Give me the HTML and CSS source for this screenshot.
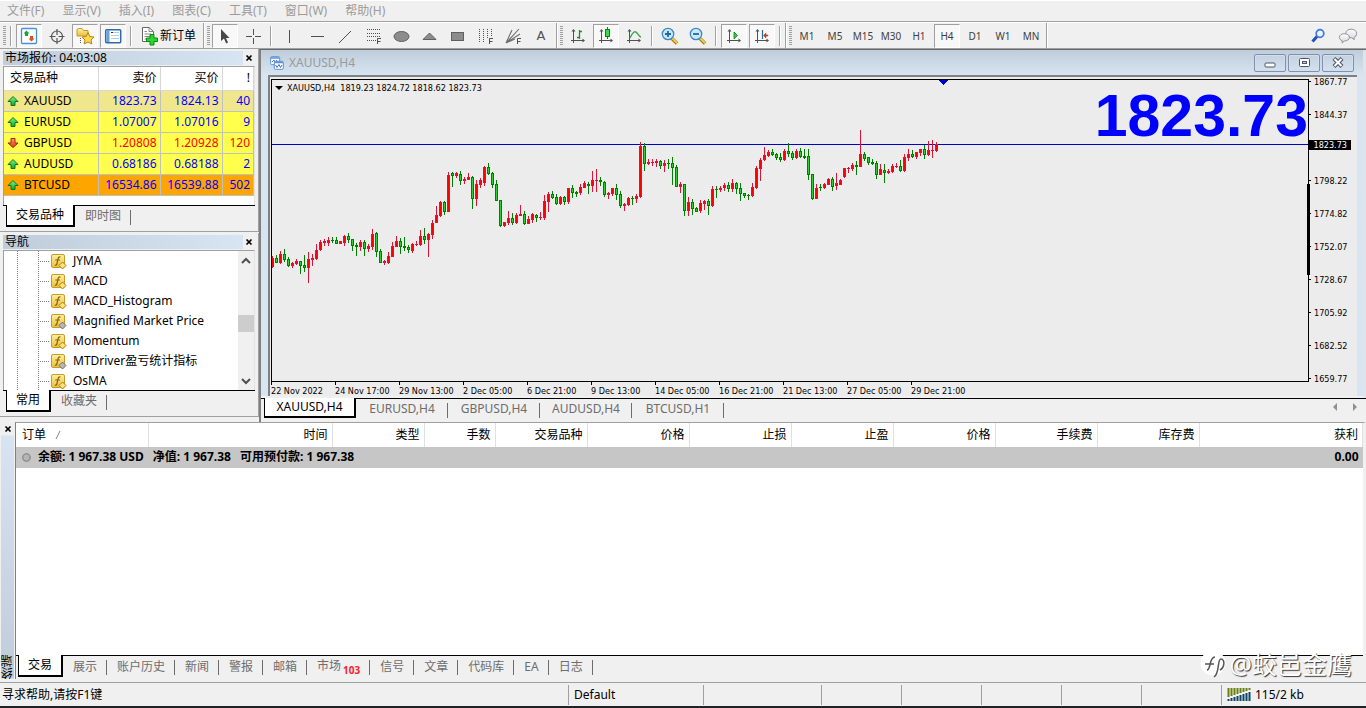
FILE: index.html
```html
<!DOCTYPE html>
<html lang="zh-CN">
<head>
<meta charset="utf-8">
<title>XAUUSD,H4</title>
<link rel="stylesheet" href="styles.css">
</head>
<body>
<svg class="defs" aria-hidden="true">
  <defs>
    <linearGradient id="gold" x1="0" y1="0" x2="0" y2="1"><stop offset="0" stop-color="#fff0a0"/><stop offset="1" stop-color="#e9bf3c"/></linearGradient>
    <linearGradient id="green" x1="0" y1="0" x2="0" y2="1"><stop offset="0" stop-color="#7df08a"/><stop offset="1" stop-color="#12a82c"/></linearGradient>
    <linearGradient id="red" x1="0" y1="0" x2="0" y2="1"><stop offset="0" stop-color="#ff9a70"/><stop offset="1" stop-color="#dd3a12"/></linearGradient>
    <linearGradient id="bubble" x1="0" y1="0" x2="0" y2="1"><stop offset="0" stop-color="#ffffff"/><stop offset="1" stop-color="#d4d4dc"/></linearGradient>
  </defs>
  <symbol id="up" viewBox="0 0 12 12"><path d="M6 1.500 L11 6.500 H8 V10.500 H4 V6.500 H1 Z" fill="url(#green)" stroke="#0b7420" stroke-width="1"/></symbol>
  <symbol id="down" viewBox="0 0 12 12"><path d="M6 10.500 L11 6 H8 V1.500 H4 V6 H1 Z" fill="url(#red)" stroke="#a02508" stroke-width="1"/></symbol>
  <symbol id="close" viewBox="0 0 8 8"><path d="M1.500 1.500 L6.500 6.500 M6.500 1.500 L1.500 6.500" stroke="#000" stroke-width="1.700"/></symbol>
  <symbol id="fn" viewBox="0 0 17 16">
    <rect x="1.500" y="1.500" width="13" height="13" rx="1.500" fill="url(#gold)" stroke="#c99a2a"/>
    <path d="M10.500 4.200 C9 3.300 8.300 4.500 8 6 L7 10.500 C6.700 12 6 12.500 4.800 12 M5.300 7 H10" fill="none" stroke="#8a6208" stroke-width="1.200"/>
  </symbol>
  <symbol id="axes" viewBox="0 0 20 20">
    <path d="M5.500 4 V17 M3 14.500 H16" stroke="#505050" fill="none"/>
    <path d="M5.500 3 L7.500 5.500 H3.500 Z M17 14.500 L14.500 12.500 V16.500 Z" fill="#505050"/>
  </symbol>
</svg>

<div class="app">
<nav class="menubar" aria-label="菜单">
  <button>文件(F)</button><button>显示(V)</button><button>插入(I)</button><button>图表(C)</button><button>工具(T)</button><button>窗口(W)</button><button>帮助(H)</button>
</nav>

<div class="toolbar">
  <div class="group">
    <i class="grip"></i><i class="sep"></i>
    <button class="tool on" aria-label="市场报价"><svg viewBox="0 0 20 20"><rect x="2.500" y="2.500" width="15" height="15" rx="1" fill="#fff" stroke="#4a90d9" stroke-width="1.300"/><path d="M7.500 4.500 L10.500 7.500 H9 V10 H6 V7.500 H4.500 Z" fill="#18a52e"/><path d="M12.500 15.500 L15.500 12.500 H14 V10 H11 V12.500 H9.500 Z" fill="#e2501c"/></svg></button>
    <button class="tool" aria-label="数据窗口"><svg viewBox="0 0 20 20" fill="none" stroke="#555" stroke-width="1.200"><circle cx="10" cy="10.500" r="5.500"/><path d="M10 3 V9 M10 12 V18 M2.500 10.500 H8.500 M11.500 10.500 H17.500"/></svg></button>
    <button class="tool on" aria-label="导航"><svg viewBox="0 0 20 20"><path d="M2 10 V4 Q2 2.500 3.500 2.500 H7 L8.500 4.500 H13 V10 Z" fill="url(#gold)" stroke="#c79a2c"/><path d="M5.500 12 V18" stroke="#555" stroke-dasharray="1 1"/><path d="M13 6.500 L14.800 10.500 L19 11 L16 14 L16.800 18 L13 16 L9.200 18 L10 14 L7 11 L11.200 10.500 Z" fill="#ffd84c" stroke="#b98518"/></svg></button>
    <button class="tool on" aria-label="终端"><svg viewBox="0 0 20 20"><rect x="2.700" y="3.700" width="15" height="13" rx="1" fill="#fff" stroke="#2b6cb0" stroke-width="1.500"/><path d="M5 4 V16" stroke="#6aa3da" stroke-width="3"/><path d="M8 6.500 H16 M8 9.500 H16 M8 12.500 H16" stroke="#b8cbe4"/><path d="M8 6.500 H10" stroke="#333"/></svg></button>
    <i class="sep"></i>
    <button class="order"><svg viewBox="0 0 20 20"><path d="M3.500 1.500 H10 L14.500 5.500 V15.500 H3.500 Z" fill="#fff" stroke="#666"/><path d="M10 1.500 V5.500 H14.500 M5.500 5.500 H8 M5.500 8 H12 M5.500 10.500 H12 M5.500 13 H9" fill="none" stroke="#888"/><path d="M11 8.500 H15 V12 H18.500 V15.500 H15 V19 H11 V15.500 H7.500 V12 H11 Z" fill="#2fd52f" stroke="#078a14"/></svg>新订单</button>
  </div>
  <div class="group">
    <i class="grip"></i>
    <button class="tool on" aria-label="光标"><svg viewBox="0 0 20 20"><path d="M6 3 V15 L9 12.500 L11.200 17.500 L13 16.500 L11 12 H14.500 Z" fill="#484848"/></svg></button>
    <button class="tool" aria-label="十字准线"><svg viewBox="0 0 20 20"><path d="M10.500 3 V9 M10.500 12 V18 M3 10.500 H9 M12 10.500 H18" stroke="#505050"/></svg></button>
    <i class="sep"></i>
    <button class="tool" aria-label="垂直线"><svg viewBox="0 0 20 20"><path d="M10.500 4 V17" stroke="#505050"/></svg></button>
    <button class="tool" aria-label="水平线"><svg viewBox="0 0 20 20"><path d="M4 10.500 H17" stroke="#505050"/></svg></button>
    <button class="tool" aria-label="趋势线"><svg viewBox="0 0 20 20"><path d="M4 17 L16 5" stroke="#505050" stroke-width="1"/></svg></button>
    <button class="tool" aria-label="斐波纳契回调线"><svg viewBox="0 0 20 20"><path d="M4 3.500 H18 M4 7.500 H18 M4 10.500 H18 M4 14.500 H13" stroke="#505050" stroke-dasharray="1 1"/><path d="M14.500 18 V12.500 H18 M14.500 15.500 H17.500" fill="none" stroke="#505050"/></svg></button>
    <button class="tool" aria-label="椭圆"><svg viewBox="0 0 20 20"><ellipse cx="10.500" cy="10.500" rx="7.500" ry="5" fill="#8c8c8c" stroke="#606060"/></svg></button>
    <button class="tool" aria-label="三角形"><svg viewBox="0 0 20 20"><path d="M4 13.500 L10.500 7 L17 13.500 Z" fill="#8c8c8c" stroke="#606060"/></svg></button>
    <button class="tool" aria-label="矩形"><svg viewBox="0 0 20 20"><rect x="4.500" y="6.500" width="12" height="8" fill="#8c8c8c" stroke="#606060"/></svg></button>
    <button class="tool" aria-label="时间周期线"><svg viewBox="0 0 20 20"><path d="M4.500 3 V16 M8.500 3 V16 M12.500 3 V13 M16.500 3 V11" stroke="#505050" stroke-dasharray="1 1"/><path d="M14.500 18 V12.500 H18 M14.500 15.500 H17.500" fill="none" stroke="#505050"/></svg></button>
    <button class="tool" aria-label="斐波纳契扇形线"><svg viewBox="0 0 20 20"><path d="M3 17 L9 4 M3 17 L16 3 M3 17 L17 8 M3 17 L12 13" stroke="#707070" stroke-width="1.100"/><path d="M14.500 18 V12.500 H18 M14.500 15.500 H17.500" fill="none" stroke="#505050"/></svg></button>
    <button class="tool letter">A</button>
  </div>
  <div class="group">
    <i class="grip"></i>
    <button class="tool" aria-label="柱状图"><svg viewBox="0 0 20 20"><use href="#axes"/><path d="M11.500 4 V13 M12 5.500 H14 M9 11.500 H11" stroke="#15941f" stroke-width="1.300"/></svg></button>
    <button class="tool on" aria-label="阴阳烛"><svg viewBox="0 0 20 20"><use href="#axes"/><path d="M11.500 1 V13" stroke="#0a8514"/><rect x="9.500" y="3.500" width="4" height="7" fill="#35dc45" stroke="#0a8514"/></svg></button>
    <button class="tool" aria-label="折线图"><svg viewBox="0 0 20 20"><use href="#axes"/><path d="M6 12 Q10 3 13 7 T17 11" fill="none" stroke="#3aa545" stroke-width="1.300"/></svg></button>
    <i class="sep"></i>
    <button class="tool" aria-label="放大"><svg viewBox="0 0 20 20"><path d="M12 12.500 L17 17.500" stroke="#a87712" stroke-width="3.500"/><path d="M12 12 L17 17" stroke="#f3cf4a" stroke-width="1.800"/><circle cx="8" cy="8" r="5.700" fill="#c9e9fb" stroke="#3a87c8" stroke-width="1.300"/><path d="M8 5 V11 M5 8 H11" stroke="#25689e" stroke-width="1.800"/></svg></button>
    <button class="tool" aria-label="缩小"><svg viewBox="0 0 20 20"><path d="M12 12.500 L17 17.500" stroke="#a87712" stroke-width="3.500"/><path d="M12 12 L17 17" stroke="#f3cf4a" stroke-width="1.800"/><circle cx="8" cy="8" r="5.700" fill="#c9e9fb" stroke="#3a87c8" stroke-width="1.300"/><path d="M5 8 H11" stroke="#25689e" stroke-width="1.800"/></svg></button>
    <i class="sep"></i>
    <button class="tool on" aria-label="自动滚动"><svg viewBox="0 0 20 20"><use href="#axes"/><path d="M10 6 L13.500 9.500 L10 13 Z" fill="#2ecc40" stroke="#0a8514" stroke-width=".8"/></svg></button>
    <button class="tool on" aria-label="图表平移"><svg viewBox="0 0 20 20"><use href="#axes"/><path d="M10.500 4 V13" stroke="#1c6ea4" stroke-width="1.200"/><path d="M11.500 9.500 L14 7 V9 H16 V10 H14 V12 Z" fill="#c23b12" stroke="#c23b12" stroke-width=".5"/></svg></button>
    <i class="sep"></i>
  </div>
  <div class="group">
    <i class="grip"></i>
    <button class="tool tf">M1</button><button class="tool tf">M5</button><button class="tool tf">M15</button><button class="tool tf">M30</button><button class="tool tf">H1</button><button class="tool tf on">H4</button><button class="tool tf">D1</button><button class="tool tf">W1</button><button class="tool tf">MN</button>
  </div>
  <div class="right">
    <button class="tool" aria-label="搜索"><svg viewBox="0 0 20 20"><path d="M9 10.500 L4.500 15.500" stroke="#1d50b8" stroke-width="3"/><circle cx="12" cy="7.500" r="3.800" fill="#eaf3fd" stroke="#3c78dc" stroke-width="1.700"/></svg></button>
    <button class="tool" aria-label="聊天"><svg viewBox="0 0 22 20"><path d="M14.500 2.500 C18 2.500 20.500 4.500 20.500 7.300 C20.500 9.500 19 11.200 17.500 11.700 L18 14 L15 12 C11 12.200 8.500 10 8.500 7.300 C8.500 4.500 11 2.500 14.500 2.500 Z" fill="url(#bubble)" stroke="#8a8a8a"/><path d="M7 7.500 C10 7.500 12.500 9 12.500 11.500 C12.500 14 10 15.500 7 15.500 L4.500 17.800 L4.700 15.200 C2.500 14.500 1.500 13 1.500 11.500 C1.500 9 4 7.500 7 7.500 Z" fill="url(#bubble)" stroke="#8a8a8a"/></svg></button>
  </div>
</div>

<main class="work">
  <aside class="dock">
    <section class="panel">
      <header class="caption"><h2>市场报价: 04:03:08</h2><button aria-label="关闭"><svg><use href="#close"/></svg></button></header>
      <div class="well quotes-well">
      <table class="quotes">
        <colgroup><col class="c-name"><col class="c-px"><col class="c-px"><col></colgroup>
        <thead><tr><th>交易品种</th><th>卖价</th><th>买价</th><th>!</th></tr></thead>
        <tbody>
          <tr class="khaki"><td><svg><use href="#up"/></svg>XAUUSD</td><td>1823.73</td><td>1824.13</td><td>40</td></tr>
          <tr><td><svg><use href="#up"/></svg>EURUSD</td><td>1.07007</td><td>1.07016</td><td>9</td></tr>
          <tr class="falling"><td><svg><use href="#down"/></svg>GBPUSD</td><td>1.20808</td><td>1.20928</td><td>120</td></tr>
          <tr><td><svg><use href="#up"/></svg>AUDUSD</td><td>0.68186</td><td>0.68188</td><td>2</td></tr>
          <tr class="orange"><td><svg><use href="#up"/></svg>BTCUSD</td><td>16534.86</td><td>16539.88</td><td>502</td></tr>
        </tbody>
      </table>
      </div>
      <div class="tabs"><button class="tab active">交易品种</button><button class="tab">即时图</button></div>
    </section>
    <section class="panel">
      <header class="caption"><h2>导航</h2><button aria-label="关闭"><svg><use href="#close"/></svg></button></header>
      <div class="well tree-well">
        <ul class="tree">
          <li><svg><use href="#fn"/><path class="gem" d="M12.500 9 L16 12.500 L12.500 16 L9 12.500 Z"/></svg>JYMA</li>
          <li><svg><use href="#fn"/><path class="gem" d="M12.500 9 L16 12.500 L12.500 16 L9 12.500 Z"/></svg>MACD</li>
          <li><svg><use href="#fn"/><path class="gem" d="M12.500 9 L16 12.500 L12.500 16 L9 12.500 Z"/></svg>MACD_Histogram</li>
          <li><svg><use href="#fn"/><path class="gem grey" d="M12.500 9 L16 12.500 L12.500 16 L9 12.500 Z"/></svg>Magnified Market Price</li>
          <li><svg><use href="#fn"/><path class="gem" d="M12.500 9 L16 12.500 L12.500 16 L9 12.500 Z"/></svg>Momentum</li>
          <li><svg><use href="#fn"/><path class="gem grey" d="M12.500 9 L16 12.500 L12.500 16 L9 12.500 Z"/></svg>MTDriver盈亏统计指标</li>
          <li><svg><use href="#fn"/><path class="gem" d="M12.500 9 L16 12.500 L12.500 16 L9 12.500 Z"/></svg>OsMA</li>
        </ul>
        <div class="scroll">
          <svg viewBox="0 0 16 20"><path d="M4 12 L8 8 L12 12" fill="none" stroke="#505050" stroke-width="2"/></svg>
          <i class="thumb"></i>
          <svg viewBox="0 0 16 20"><path d="M4 9 L8 13 L12 9" fill="none" stroke="#505050" stroke-width="2"/></svg>
        </div>
      </div>
      <div class="tabs"><button class="tab active">常用</button><button class="tab">收藏夹</button></div>
    </section>
  </aside>

  <section class="mdi">
    <div class="window">
      <header class="titlebar">
        <svg class="app-icon" viewBox="0 0 14 14"><rect x=".7" y=".7" width="9" height="8" rx="1" fill="#fff" stroke="#5b8fd6"/><path d="M1 2 H9" stroke="#5b8fd6" stroke-width="1.500"/><path d="M2 6 L4 4 L5 7 L7 4" fill="none" stroke="#3d73c4"/><rect x="4.300" y="5.300" width="9" height="8" rx="1" fill="#fff" stroke="#5b8fd6"/><path d="M4.500 6.500 H13" stroke="#5b8fd6" stroke-width="1.500"/><path d="M5.500 9 L7 11.500 L9 8.500 L10.500 11.500 L12 9" fill="none" stroke="#3d73c4"/></svg>
        <h1>XAUUSD,H4</h1>
        <button aria-label="最小化"><svg viewBox="0 0 14 12"><rect x="2" y="6" width="10" height="4" rx="1" fill="#fff" stroke="#4c5468"/></svg></button>
        <button aria-label="还原"><svg viewBox="0 0 14 12"><rect x="2.500" y="1.500" width="10" height="8" rx="1" fill="#fff" stroke="#4c5468"/><rect x="5.500" y="4.500" width="4" height="2" fill="#c3d0e2" stroke="#4c5468"/></svg></button>
        <button aria-label="关闭图表"><svg viewBox="0 0 14 12"><path d="M3 1.500 L11 9.500 M11 1.500 L3 9.500" stroke="#4c5468" stroke-width="4"/><path d="M3.500 2 L10.500 9 M10.500 2 L3.500 9" stroke="#fff" stroke-width="2"/></svg></button>
      </header>
      <div class="chart">
        <div class="plot">
          <svg class="candles" id="candles" role="img" aria-label="XAUUSD H4"></svg>
          <p class="ohlc"><svg viewBox="0 0 8 8"><path d="M0 2 H8 L4 6 Z"/></svg>XAUUSD,H4&nbsp; 1819.23 1824.72 1818.62 1823.73</p>
          <strong class="big">1823.73</strong>
        </div>
        <ol class="prices">
          <li>1867.77</li><li>1844.37</li><li></li><li>1798.22</li><li>1774.82</li><li>1752.07</li><li>1728.67</li><li>1705.92</li><li>1682.52</li><li>1659.77</li>
        </ol>
        <span class="bid">1823.73</span>
        <i class="range"></i>
        <ol class="times">
          <li>22 Nov 2022</li><li>24 Nov 17:00</li><li>29 Nov 13:00</li><li>2 Dec 05:00</li><li>6 Dec 21:00</li><li>9 Dec 13:00</li><li>14 Dec 05:00</li><li>16 Dec 21:00</li><li>21 Dec 13:00</li><li>27 Dec 05:00</li><li>29 Dec 21:00</li>
        </ol>
      </div>
    </div>
    <div class="tabs chart-tabs"><button class="tab active">XAUUSD,H4</button><button class="tab">EURUSD,H4</button><button class="tab">GBPUSD,H4</button><button class="tab">AUDUSD,H4</button><button class="tab">BTCUSD,H1</button>
      <span class="pager"><svg viewBox="0 0 8 8"><path d="M6 0 V8 L2 4 Z"/></svg><svg viewBox="0 0 8 8"><path d="M2 0 V8 L6 4 Z"/></svg></span></div>
  </section>
</main>

<section class="terminal">
  <div class="side"><button aria-label="关闭终端"><svg><use href="#close"/></svg></button><h2>终端</h2></div>
  <div class="body">
    <div class="grid">
      <table class="orders">
        <colgroup><col class="w1"><col class="w2"><col class="w3"><col class="w4"><col class="w3"><col class="w5"><col class="w5"><col class="w5"><col class="w5"><col class="w5"><col class="w5"><col></colgroup>
        <thead><tr><th>订单 <svg viewBox="0 0 8 8"><path d="M2 8 L6 0" stroke="#808080"/></svg></th><th>时间</th><th>类型</th><th>手数</th><th>交易品种</th><th>价格</th><th>止损</th><th>止盈</th><th>价格</th><th>手续费</th><th>库存费</th><th>获利</th></tr></thead>
        <tbody><tr><td colspan="11"><svg viewBox="0 0 8 8"><circle cx="4" cy="4" r="3.300" fill="#b4b4b4" stroke="#808080"/></svg><span>余额: 1 967.38 USD</span><span>净值: 1 967.38</span><span>可用预付款: 1 967.38</span></td><td>0.00</td></tr></tbody>
      </table>
    </div>
    <div class="tabs"><button class="tab active">交易</button><button class="tab">展示</button><button class="tab">账户历史</button><button class="tab">新闻</button><button class="tab">警报</button><button class="tab">邮箱</button><button class="tab">市场<sub>103</sub></button><button class="tab">信号</button><button class="tab">文章</button><button class="tab">代码库</button><button class="tab">EA</button><button class="tab">日志</button></div>
  </div>
  <p class="mark"><svg viewBox="0 0 26 28"><circle cx="13" cy="13" r="12.500" fill="#fff"/><path d="M5 14 H14 M7 20 C11 20 9 7 15 7 M14 27 C20 23 17 9 21 9 C25 9 25 17 20 20" fill="none" stroke="#555" stroke-width="1.500"/></svg>@蛟邑金鹰</p>
</section>

<footer class="status">
  <span class="help">寻求帮助,请按F1键</span><span class="profile">Default</span><span class="s1"></span><span class="s2"></span><span class="s2"></span><span class="s2"></span><span class="s2"></span><span class="s2"></span>
  <span class="net"><svg viewBox="0 0 24 14"><path d="M1.500 0 V9 M4.500 0 V8 M7.500 0 V7 M10.500 0 V6 M13.500 0 V5 M16.500 0 V4 M19.500 0 V3 M22.500 0 V2" stroke="#6b7f10" stroke-width="2"/><path d="M1.500 11 V13 M4.500 10 V13 M7.500 9 V13 M10.500 8 V13 M13.500 7 V13 M16.500 6 V13 M19.500 5 V13 M22.500 4 V13" stroke="#0d4668" stroke-width="2"/></svg>115/2 kb</span>
</footer>
</div>
<script src="chart.js"></script>
</body>
</html>
```

FILE: styles.css
```css
* { box-sizing: border-box; }
body, h1, h2, p, ol, ul { margin: 0; padding: 0; }
ol, ul { list-style: none; }
body, button { font: 12px/16px "Noto Sans", "Noto Sans CJK SC", sans-serif; }
body { background: #f0f0f0; color: #000; overflow: hidden; }
button { border: 0; padding: 0; margin: 0; background: none; color: inherit; white-space: nowrap; }
h1, h2 { font-size: 12px; font-weight: 400; }
svg { display: block; }
table { border-collapse: collapse; table-layout: fixed; width: 100%; }
th { font-weight: 400; }
.defs { position: absolute; width: 0; height: 0; }
.app { display: flex; flex-direction: column; height: 100vh; }

.menubar { display: flex; gap: 18px; padding: 2px 7px; height: 22px; color: #9b9b9b; border-top: 1px solid #fff; border-bottom: 1px solid #a0a0a0; }

.toolbar { display: flex; height: 26px; border-top: 1px solid #fff; }
.group { display: flex; align-items: center; padding: 0 1px 0 3px; border-right: 1px solid #a0a0a0; box-shadow: 1px 0 #fff; }
.grip { width: 3px; height: 19px; margin-right: 1px; background: repeating-linear-gradient(#a0a0a0 0 1px, #f0f0f0 1px 2px); }
.sep { width: 8px; height: 20px; background: linear-gradient(90deg, #a0a0a0 1px, #fff 1px 2px) center / 2px 20px no-repeat; }
.tool { display: flex; align-items: center; justify-content: center; width: 26px; height: 24px; margin: 0 1px; border: 1px solid transparent; }
.tool svg { width: 20px; height: 20px; flex: none; }
.tool.on { background: #f8f8f8; border-color: #a0a0a0 #fff #fff #a0a0a0; }
.tool.letter { font: 13px/16px "DejaVu Sans", sans-serif; color: #505050; }
.tool.tf { font-size: 10px; color: #404040; }
.order { display: flex; align-items: center; gap: 1px; padding: 0 6px 0 4px; }
.order svg { width: 20px; height: 20px; }
.right { display: flex; align-items: center; gap: 2px; margin-left: auto; padding-right: 4px; }

.work { display: flex; flex: none; border-top: 1px solid #a0a0a0; }
.dock { width: 259px; flex: none; padding-bottom: 4px; }
.panel { padding: 2px 3px 3px; border-bottom: 1px solid #a0a0a0; border-right: 1px solid #a0a0a0; margin-bottom: 1px; }
.caption { display: flex; justify-content: space-between; align-items: center; height: 14px; margin-bottom: 1px; }
.caption h2 { flex: 1; padding-left: 2px; line-height: 14px; background: linear-gradient(90deg, #bfcddb, #d7e4f2); }
.caption button { width: 12px; display: flex; justify-content: center; }
.caption svg, .side svg { width: 8px; height: 8px; }
.well { background: #fff; border-top: 1px solid #a0a0a0; border-left: 1px solid #a0a0a0; border-right: 1px solid #e3e3e3; }
.quotes-well { padding-bottom: 9px; }
.c-name { width: 94px; }
.c-px { width: 62px; }
.quotes th, .quotes td { height: 21px; padding: 0 3px 0 0; text-align: right; border-right: 1px solid #c0c0c0; border-bottom: 1px solid #c0c0c0; }
.quotes th { height: 23px; border-color: #d8d8d8; }
.quotes th:first-child { text-align: left; padding-left: 6px; }
.quotes td { background: #ffff4c; color: #00f; }
.quotes td:first-child { text-align: left; padding-left: 3px; }
.quotes td svg { display: inline-block; vertical-align: middle; width: 12px; height: 12px; margin-right: 5px; }
.quotes .khaki td { background: #f0e68c; }
.quotes .falling td { color: #f00; }
.quotes .orange td { background: #ffa500; }
.quotes td:first-child, .quotes .falling td:first-child { color: #000; }

.tabs { display: flex; height: 23px; padding-left: 3px; border-top: 1px solid #000; }
.tab { position: relative; height: 21px; padding: 0 10px; color: #6d6d6d; }
.tab:not(.active)::after { content: ""; position: absolute; right: 0; top: 4px; height: 15px; border-right: 1px solid #6d6d6d; }
.tab.active { margin-top: -1px; height: 22px; padding: 0 9px; background: #fff; color: #000; border: 1px solid #000; border-width: 0 2px 2px 1px; }

.tree-well { display: flex; height: 140px; }
.tree { flex: 1; background: repeating-linear-gradient(#808080 0 1px, #fff 1px 2px) 13px 0 / 1px 100% no-repeat, repeating-linear-gradient(#808080 0 1px, #fff 1px 2px) 34px 0 / 1px 100% no-repeat; }
.tree li { display: flex; align-items: center; gap: 6px; height: 20px; padding-left: 46px; background: repeating-linear-gradient(90deg, #808080 0 1px, transparent 1px 2px) 34px 10px / 11px 1px no-repeat; white-space: nowrap; }
.tree svg { width: 17px; height: 16px; }
.gem { fill: #ffe27a; stroke: #a97c12; }
.gem.grey { fill: #b8b8b8; stroke: #707070; }
.scroll { display: flex; flex-direction: column; width: 16px; background: #f0f0f0; }
.scroll svg { height: 20px; }
.scroll svg:last-child { margin-top: auto; }
.thumb { height: 17px; margin-top: 44px; background: #cdcdcd; }

.mdi { flex: 1; min-width: 0; display: flex; flex-direction: column; border-left: 2px solid #808080; border-top: 1px solid #696969; }
.window { flex: 1; display: flex; flex-direction: column; min-height: 0; padding: 0 6px 0 7px; background: #d7e4f2; border-right: 3px solid #e3e3e3; border-bottom: 2px solid #f0f0f0; }
.titlebar { display: flex; align-items: center; gap: 2px; height: 25px; flex: none; margin: 0 -6px 0 -7px; padding: 0 9px; background: linear-gradient(#bfcddb, #d7e4f2); }
.titlebar h1 { flex: 1; padding-left: 3px; color: #9a9a9a; }
.app-icon { width: 14px; height: 14px; }
.titlebar button { width: 32px; height: 18px; border: 1px solid #8290b0; border-radius: 2px; box-shadow: inset 0 0 0 1px #d3deec; display: flex; align-items: center; justify-content: center; }
.titlebar button svg { width: 14px; height: 12px; }
.chart { position: relative; flex: 1; min-height: 0; display: grid; grid-template: minmax(0, 1fr) 14px / minmax(0, 1fr) 48px; background: #ececec; border-top: 2px solid #808080; border-left: 2px solid #808080; font: 9px/10px "DejaVu Sans Condensed", "Noto Sans", sans-serif; }
.plot { position: relative; overflow: hidden; margin: 2px 0 0 1px; border: 1px solid #000; }
.candles { position: absolute; inset: 0; width: 100%; height: 100%; shape-rendering: crispEdges; }
.ohlc { position: absolute; left: 3px; top: 3px; display: flex; align-items: center; gap: 4px; white-space: nowrap; }
.ohlc svg { width: 8px; height: 8px; }
.big { position: absolute; right: 0; top: 6px; font: bold 59px/60px "Liberation Sans", sans-serif; color: #00f; }
.prices { height: 0; }
.prices li { height: 33px; display: flex; align-items: flex-start; gap: 3px; }
.prices li::before { content: ""; width: 2px; height: 1px; margin-top: 4px; background: #000; }
.bid { position: absolute; right: 6px; top: 63px; padding: 0 4px 0 6px; background: #000; color: #fff; }
.range { position: absolute; right: 47px; top: 107px; width: 3px; height: 91px; background: #000; }
.times { grid-column: 1 / 3; display: flex; padding-left: 1px; }
.times li { width: 64px; flex: none; padding-top: 4px; white-space: nowrap; position: relative; }
.times li::before { content: ""; position: absolute; top: 0; left: 0; height: 3px; border-left: 1px solid #000; }
.chart-tabs { height: 24px; }
.chart-tabs .tab { width: 92px; padding: 0; height: 20px; }
.pager { display: flex; gap: 12px; margin-left: auto; padding: 4px 7px; }
.pager svg { width: 8px; height: 8px; fill: #909090; }

.terminal { position: relative; flex: 1; min-height: 0; display: flex; padding-bottom: 3px; }
.side { width: 15px; display: flex; flex-direction: column; align-items: center; padding-bottom: 1px; }
.side button { height: 14px; display: flex; align-items: center; }
.side h2 { flex: 1; width: 13px; writing-mode: vertical-rl; transform: rotate(180deg); line-height: 13px; background: linear-gradient(#bfcddb, #d7e4f2); }
.body { flex: 1; min-width: 0; display: flex; flex-direction: column; border-left: 1px solid #808080; border-top: 1px solid #a0a0a0; border-right: 3px solid #f0f0f0; }
.grid { flex: 1; min-height: 0; background: #fff; }
.w1 { width: 132px; } .w2 { width: 184px; } .w3 { width: 92px; } .w4 { width: 71px; } .w5 { width: 102px; }
.orders th, .orders td { padding: 0 4px; text-align: right; }
.orders th { height: 24px; border-right: 1px solid #e0e0e0; }
.orders th:first-child, .orders td:first-child { text-align: left; padding-left: 6px; }
.orders th svg { display: inline-block; width: 8px; height: 8px; margin-left: 5px; }
.orders td { height: 21px; background: #c6c6c6; font-weight: 700; white-space: nowrap; }
.orders td svg { display: inline-block; width: 9px; height: 9px; margin-right: 7px; vertical-align: middle; }
.orders span + span { margin-left: 9px; }
.body .tabs { flex: none; height: 24px; padding-left: 2px; }
.tab sub { font-size: 10px; line-height: 10px; font-weight: 700; color: #f5222d; margin-left: 2px; vertical-align: -4px; }
.mark { position: absolute; right: 14px; bottom: 2px; display: flex; align-items: center; gap: 4px; color: #fff; font-size: 25px; line-height: 32px; text-shadow: 1px 1px 1px #333; }
.mark svg { width: 26px; height: 28px; }

.status { display: flex; height: 26px; flex: none; align-items: center; border-top: 1px solid #a0a0a0; border-bottom: 2px solid #202326; }
.status > span { height: 20px; line-height: 20px; padding-left: 5px; border-left: 1px solid #a0a0a0; }
.status .help { flex: 1; border: 0; padding-left: 2px; }
.profile { width: 135px; }
.s1 { width: 118px; }
.s2 { width: 80px; }
.status .net { display: flex; align-items: center; gap: 4px; width: 145px; }
.net svg { width: 24px; height: 14px; }
```

FILE: chart.js
```js
// Each run: first bar index, vertical offset, and bars as "colour high top bottom low".
const runs = [
  { first: 0, offset: 50, bars: "r126 128 137 138,g125 128 133 133,r121 124 133 134,g119 124 130 132,g127 129 136 137,r132 133 136 138,r129 131 134 135,g131 131 136 144,g125 135 138 142,r122 129 138 153,r124 128 130 136,r114 120 129 130,r110 112 120 121,r109 111 113 116,r107 110 113 116,g107 110 111 113,g107 110 114 114,r111 111 114 114,r105 106 113 116,g103 106 110 113,g109 109 116 121,g113 115 117 126,r110 112 117 121,g110 112 119 126,r114 116 119 122,r99 104 117 120,g102 103 122 127,g119 121 133 133,r130 131 133 135,r122 126 133 134,r112 116 127 127,r106 111 117 117,g108 111 117 124,g107 116 118 121,g115 117 120 123,r113 114 121 123,r111 114 115 116,r100 106 115 116,g98 106 110 114,r103 104 110 127,r90 93 105 109,r76 85 93 93,r71 72 86 87,g71 72 82 85,r42 45 82 82,g42 43 46 57,r42 43 46 48,g41 44 51 55,r47 49 51 54,r43 47 50 50,g46 47 69 79,r50 54 69 76,r48 50 55 58,r36 37 53 56,g33 37 44 45,g42 43 55 58,g50 54 71 71,g70 70 96 97,r92 92 96 97" },
  { first: 59, offset: 40, bars: "r91 98 103 105,g93 98 103 105,r93 95 103 104,r85 94 96 96,g91 94 104 105,r96 99 104 104,r93 94 100 103,g94 95 98 102,r92 97 98 100,r75 81 98 100,r72 74 82 92,g71 74 78 79,g74 77 84 85,r76 77 84 85,g76 77 82 85,r68 68 82 84,g65 68 73 78,g71 72 74 77,r64 67 73 75,r61 63 68 68,g62 64 66 74,r51 60 66 72,r49 60 61 72,g57 60 62 66,g61 62 75 77,r72 73 75 79,r68 68 74 76,g64 68 75 80,g71 74 86 88,r83 84 86 91,r77 78 85 86,g76 78 79 85,r74 76 79 83,r22 26 77 78,g23 26 44 51,r39 42 44 45,r39 42 43 46,r39 41 43 47,g40 41 46 49,r40 43 46 52,g39 43 44 49,g37 43 48 65,g45 47 67 67,r62 64 67 73,g64 64 91 96,r77 82 91 96,g79 82 89 95,g87 88 92 92,r80 83 91 93,r80 81 84 90,g79 81 86 95" },
  { first: 110, offset: -10, bars: "r116 119 136 137,g116 119 120 128,r116 118 120 122,r113 115 118 121,g112 115 119 122,r109 113 119 122,g112 113 119 124,g113 118 124 131,g123 123 126 128,g124 125 126 130,r113 117 126 127,r96 98 118 119,r88 90 99 111,r77 85 90 91,r80 82 86 87,g79 82 85 86,g83 84 88 90,g83 87 90 92,r79 81 90 91,g73 81 84 87,g81 83 88 90,r79 81 88 89,g78 81 87 88,g79 86 88 89,g79 86 105 110,g104 104 129 130,r114 118 129 129,g114 117 118 121,r113 114 118 119,r108 109 115 115,g107 109 117 121,r103 113 116 120,r109 110 115 115,r98 98 107 108,r97 98 99 103,r93 95 99 101,g91 95 97 105,r60 84 97 97,g82 84 89 91,g87 87 93 95,g89 92 94 95,g91 93 105 109,r94 99 105 105,g94 100 103 113,r99 101 103 104,r94 96 102 103,r93 96 97 98,g90 96 101 102,r84 87 101 102,r79 84 88 91,g80 84 87 88,r82 82 87 89,r79 79 83 86,g75 79 85 89,r71 80 85 86,r70 80 81 88,r72 74 81 82" }
];
const svg = document.getElementById("candles");
const add = (tag, attrs) => {
  const el = document.createElementNS("http://www.w3.org/2000/svg", tag);
  for (const key in attrs) el.setAttribute(key, attrs[key]);
  svg.append(el);
};
const rect = (x, y, width, height, fill) => add("rect", { x, y, width, height, fill });
rect(0, 64, "100%", 1, "#0000c8");
for (const run of runs) {
  run.bars.split(",").forEach((bar, n) => {
    const [high, top, bottom, low] = bar.slice(1).split(" ").map(v => Number(v) + run.offset);
    const x = (run.first + n) * 4;
    const line = bar[0] === "r" ? "#dc143c" : "#008000";
    rect(x, high, 1, low - high, line);
    rect(x - 1, top, 3, Math.max(1, bottom - top), line);
    if (bottom - top > 2) rect(x, top + 1, 1, bottom - top - 2, bar[0] === "r" ? "#ff0000" : "#32cd32");
  });
}
add("path", { d: "M666 0 H676 L671 5 Z", fill: "#0000c8" });
```
